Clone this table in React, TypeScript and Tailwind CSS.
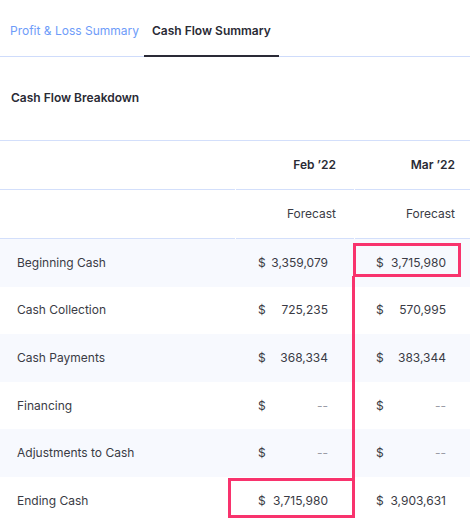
import React from 'react';

type Row = {
  label: string;
  feb: string;
  mar: string;
};

const rows: Row[] = [
  { label: 'Beginning Cash', feb: '3,359,079', mar: '3,715,980' },
  { label: 'Cash Collection', feb: '725,235', mar: '570,995' },
  { label: 'Cash Payments', feb: '368,334', mar: '383,344' },
  { label: 'Financing', feb: '--', mar: '--' },
  { label: 'Adjustments to Cash', feb: '--', mar: '--' },
  { label: 'Ending Cash', feb: '3,715,980', mar: '3,903,631' },
];

// 金額セル
function MoneyCell({ value }: { value: string }) {
  const empty = value === '--';
  return (
    <div className="flex items-center justify-end pr-[26px]">
      <div className="flex w-[70px] items-center justify-between">
        <span>$</span>
        <span className={empty ? 'text-[#9a9ca6]' : ''}>{value}</span>
      </div>
    </div>
  );
}

export default function App() {
  return (
    <div
      className="relative w-[470px] h-[525px] overflow-hidden bg-white text-[12px] text-[#2f303b]"
      style={{ fontFamily: 'Inter, "Noto Sans", sans-serif' }}
    >
      {/* タブ */}
      <div className="flex h-[57px] items-start border-b border-[#cfdcfb]">
        <div className="pl-[10px] pr-[5px] pt-[21px] text-[#6e9cf9] leading-[20px]">
          Profit &amp; Loss Summary
        </div>
        <div className="relative h-full px-[8px] pt-[21px] font-semibold text-[#2a2b35] leading-[20px]">
          Cash Flow Summary
          <span className="absolute left-0 right-0 bottom-[-1px] h-[2px] bg-[#2a2a36]" />
        </div>
      </div>

      {/* テーブル */}
      <div className="grid grid-cols-[235px_118px_118px] gap-x-[1px] w-[472px]">
        <div className="col-span-3 flex h-[84px] items-center border-b border-[#d3dffb] pb-[2px] pl-[11px] font-semibold text-[#2a2b35]">
          Cash Flow Breakdown
        </div>

        <div className="h-[49px] border-b border-[#d3dffb]" />
        <div className="flex h-[49px] items-center justify-end border-b border-[#d3dffb] pr-[18px] font-semibold text-[#2a2b35]">
          Feb &rsquo;22
        </div>
        <div className="flex h-[49px] items-center justify-end border-b border-[#d3dffb] pr-[18px] font-semibold text-[#2a2b35]">
          Mar &rsquo;22
        </div>

        <div className="h-[49px] border-b border-[#d3dffb]" />
        <div className="flex h-[49px] items-center justify-end border-b border-[#d3dffb] pr-[18px] text-[#3a3b45]">
          Forecast
        </div>
        <div className="flex h-[49px] items-center justify-end border-b border-[#d3dffb] pr-[18px] text-[#3a3b45]">
          Forecast
        </div>
      </div>

      <div className="w-[472px]">
        {rows.map((row, i) => (
          <div
            key={row.label}
            className={`grid h-[47.6px] grid-cols-[236px_118px_118px] items-center text-[#3a3b45] ${
              i % 2 === 0 ? 'bg-[#f7f9fe]' : 'bg-white'
            }`}
          >
            <div className="pl-[17px]">{row.label}</div>
            <MoneyCell value={row.feb} />
            <MoneyCell value={row.mar} />
          </div>
        ))}
      </div>

      {/* ハイライト注釈 */}
      <div className="pointer-events-none absolute left-[353px] top-[243px] h-[34px] w-[108px] border-[3px] border-[#f8336d]" />
      <div className="pointer-events-none absolute left-[352px] top-[276px] h-[203px] w-[3px] bg-[#f8336d]" />
      <div className="pointer-events-none absolute left-[228px] top-[478px] h-[40px] w-[127px] border-[3px] border-[#f8336d]" />
    </div>
  );
}
